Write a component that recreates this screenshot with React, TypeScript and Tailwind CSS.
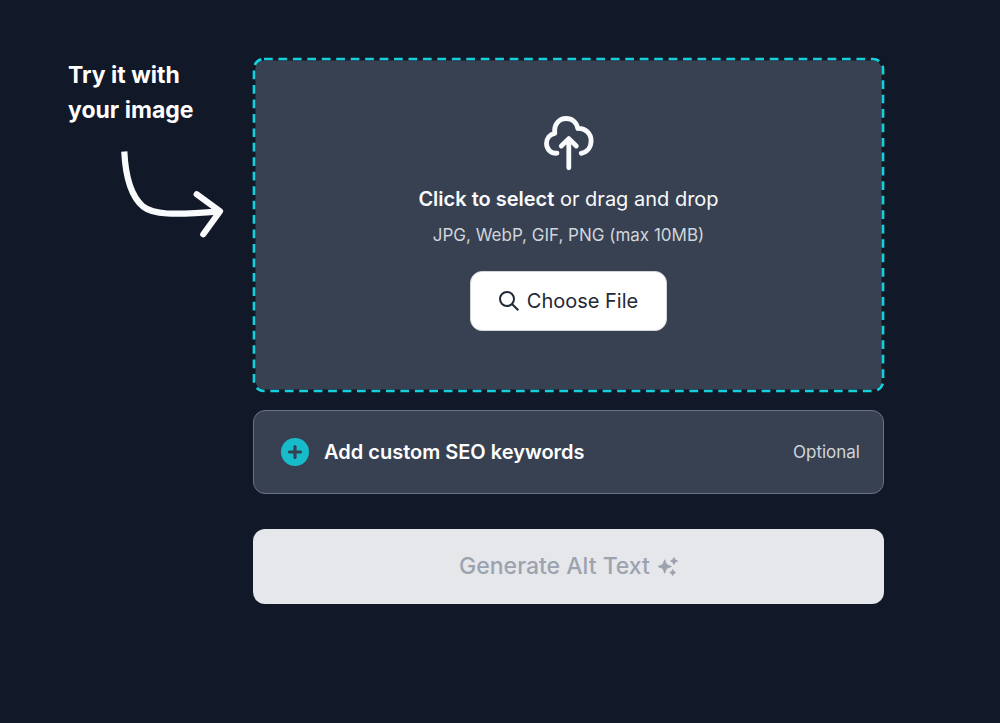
import React, { useRef } from "react";

function CurvedArrow() {
  return (
    <svg className="mt-[22px] ml-12 h-24 w-28 text-[#f9fafb]" viewBox="116 150 112 96" fill="none" stroke="currentColor" strokeWidth="6.2" aria-hidden="true">
      <path d="M124.3 151.5C125.5 177 132 197 143 206.5C153 214.5 172 215.5 220 211.3" />
      <path d="M196.7 194.3L220 211.3L203.3 234.3" strokeLinecap="round" strokeLinejoin="round" />
    </svg>
  );
}

function CloudUploadIcon() {
  return (
    <svg className="h-15 w-14 text-[#f9fafb]" viewBox="0.5 0 56 60" fill="none" stroke="currentColor" strokeWidth="4.8" strokeLinecap="round" strokeLinejoin="round" aria-hidden="true">
      <path d="M16.5 41.2C10.5 41.6 6 37.2 6 31.5C6 26 9.5 22.2 14.3 21.3C13.1 12.8 18.2 6.5 25.7 6.5C31.5 6.5 36 10 37.300 16.500C45 16 50.600 21.700 50.600 28.800C50.600 35 47 40 40.800 41.300" />
      <path d="M28.300 55.800V26.800M20.800 34L28.300 26.600L35.800 34" />
    </svg>
  );
}

function SearchIcon() {
  return (
    <svg className="size-5" viewBox="0 0 20 20" fill="none" stroke="currentColor" strokeWidth="2" aria-hidden="true">
      <circle cx="8" cy="8" r="7" />
      <path d="M13 13L19.300 19.300" />
    </svg>
  );
}

function PlusIcon() {
  return (
    <svg className="size-7" viewBox="0 0 28 28" aria-hidden="true">
      <circle cx="14" cy="14" r="14" fill="#17bccb" />
      <path d="M14 8.500V19.500M8.500 14H19.500" stroke="#374151" strokeWidth="3.200" strokeLinecap="round" />
    </svg>
  );
}

function SparklesIcon() {
  return (
    <svg className="size-5" viewBox="0.500 0.500 20 20" fill="currentColor" stroke="currentColor" strokeWidth="0.900" strokeLinejoin="round" aria-hidden="true">
      <path d="M7.200 3.300L9.100 8.100L13.900 10L9.100 11.900L7.200 16.700L5.300 11.900L0.500 10L5.300 8.100Z" />
      <path d="M16.500 1L17.700 3.300L20 4.500L17.700 5.700L16.500 8L15.300 5.700L13 4.500L15.300 3.300Z" />
      <path d="M15.200 13L16.200 15L18.200 16L16.200 17L15.200 19L14.200 17L12.200 16L14.200 15Z" />
    </svg>
  );
}

function DropZone() {
  const fileInput = useRef<HTMLInputElement>(null);

  return (
    <div className="relative flex flex-col items-center rounded-xl bg-[#384152] px-6 pt-[54px] pb-[61px]">
      {/* dashed outline with long dashes */}
      <svg className="pointer-events-none absolute top-px left-px h-[calc(100%-2px)] w-[calc(100%-2px)] overflow-visible" fill="none" aria-hidden="true">
        <rect width="100%" height="100%" rx="10" stroke="#111827" strokeWidth="3" />
        <rect width="100%" height="100%" rx="10" stroke="#15d0dc" strokeWidth="2.700" strokeDasharray="8.700 5.750" />
      </svg>
      <CloudUploadIcon />
      <p className="mt-[11px] text-xl leading-8 text-[#f9fafb]">
        <span className="font-semibold">Click to select</span> or drag and drop
      </p>
      <p className="mt-2 text-[17px] leading-6 text-[#d1d5db]">JPG, WebP, GIF, PNG (max 10MB)</p>
      <input ref={fileInput} type="file" accept="image/*" aria-label="Image file" className="hidden" />
      <button
        type="button"
        onClick={() => fileInput.current?.click()}
        className="mt-6 flex items-center gap-2 rounded-xl border border-[#d1d5db] bg-white px-7 py-3.5 text-xl leading-[30px] text-[#1f2937]"
      >
        <SearchIcon />
        Choose File
      </button>
    </div>
  );
}

export default function App() {
  return (
    <main className="flex min-h-screen bg-[#111827] pt-[58px] pr-[116px] pb-12 pl-[68px] font-['Inter',sans-serif]">
      {/* HINT */}
      <div className="w-[185px] shrink-0">
        <h2 className="text-[23px] leading-[35px] font-bold text-white">
          Try it with
          <br />
          your image
        </h2>
        <CurvedArrow />
      </div>

      {/* UPLOAD FORM */}
      <div className="min-w-0 flex-1">
        <DropZone />
        <button type="button" className="mt-[18px] flex w-full items-center rounded-xl border border-[#6b7280] bg-[#384152] px-[27px] py-[25px] text-left">
          <PlusIcon />
          <span className="ml-[15px] text-xl leading-8 font-semibold text-white">Add custom SEO keywords</span>
          <span className="-mr-1 ml-auto text-[17px] leading-6 text-[#d1d5db]">Optional</span>
        </button>
        <button
          type="button"
          disabled
          className="mt-[35px] flex w-full items-center justify-center gap-2 rounded-xl bg-[#e5e7eb] py-5 text-[23px] leading-[35px] font-medium text-[#9ca3af]"
        >
          Generate Alt Text
          <SparklesIcon />
        </button>
      </div>
    </main>
  );
}
